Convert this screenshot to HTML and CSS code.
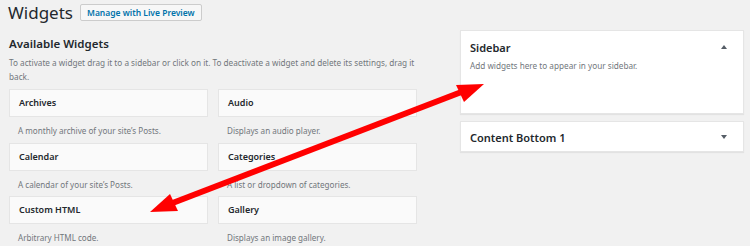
FILE: index.html
```html
<!DOCTYPE html>
<html>
<head>
<meta charset="utf-8">
<link rel="stylesheet" href="styles.css">
</head>
<body>
<div class="page">
  <div class="head">
    <h1 class="title">Widgets</h1>
    <a class="btn">Manage with Live Preview</a>
  </div>
  <div class="cols">
    <div class="left">
      <h2 class="sub">Available Widgets</h2>
      <p class="desc">To activate a widget drag it to a sidebar or click on it. To deactivate a widget and delete its settings, drag it back.</p>
      <div class="grid">
        <div class="widget"><div class="wcard">Archives</div><div class="wdesc">A monthly archive of your site’s Posts.</div></div>
        <div class="widget"><div class="wcard">Audio</div><div class="wdesc">Displays an audio player.</div></div>
        <div class="widget"><div class="wcard">Calendar</div><div class="wdesc">A calendar of your site’s Posts.</div></div>
        <div class="widget"><div class="wcard">Categories</div><div class="wdesc">A list or dropdown of categories.</div></div>
        <div class="widget"><div class="wcard">Custom HTML</div><div class="wdesc">Arbitrary HTML code.</div></div>
        <div class="widget"><div class="wcard">Gallery</div><div class="wdesc">Displays an image gallery.</div></div>
      </div>
    </div>
    <div class="right">
      <div class="panel open">
        <div class="ptitle"><span>Sidebar</span><span class="caret up"></span></div>
        <div class="pdesc">Add widgets here to appear in your sidebar.</div>
      </div>
      <div class="panel">
        <div class="ptitle"><span>Content Bottom 1</span><span class="caret down"></span></div>
      </div>
    </div>
  </div>
</div>
<svg class="arrow" width="750" height="246" viewBox="0 0 750 246">
  <line x1="170" y1="204" x2="464" y2="91" stroke="#f00" stroke-width="6"/>
  <polygon points="150,212 170,194 178,211" fill="#f00"/>
  <polygon points="484,84 464,102 456,85" fill="#f00"/>
</svg>
</body>
</html>
```
FILE: styles.css
```css
* { box-sizing: border-box; }
body {
  margin: 0;
  background: #f1f1f1;
  font-family: "Noto Sans", "Open Sans", sans-serif;
  color: #23282d;
  overflow: hidden;
  position: relative;
  width: 750px;
  height: 246px;
}
.page { padding: 4px 0 0 8px; }
.head { display: flex; align-items: center; gap: 7px; height: 17px; }
.title { margin: 0; font-size: 17px; font-weight: 400; line-height: 17px; }
.btn {
  display: inline-block;
  height: 17px;
  line-height: 15px;
  padding: 0 6px;
  border: 1px solid #ccc;
  background: #f7f7f7;
  border-radius: 2px;
  color: #0073aa;
  font-size: 8.5px;
  font-weight: 600;
}
.cols { display: flex; margin-top: 15px; }
.left { width: 409px; padding-left: 1px; }
.sub { margin: 0; font-size: 11.5px; font-weight: 600; line-height: 16px; }
.desc { margin: 4px 0 0; font-size: 8.2px; line-height: 13.5px; color: #72777c; width: 408px; }
.grid { display: grid; grid-template-columns: 199px 199px; column-gap: 10px; margin-top: 6px; }
.widget { height: 53.5px; }
.wcard {
  height: 28px;
  background: #fafafa;
  border: 1px solid #e5e5e5;
  font-size: 9px;
  font-weight: 600;
  line-height: 26px;
  padding-left: 9px;
}
.wdesc { font-size: 8.1px; color: #72777c; line-height: 12px; padding: 8px 0 0 9px; }
.right { margin-left: 43px; width: 284px; margin-top: -6px; }
.panel {
  background: #fff;
  border: 1px solid #e5e5e5;
  box-shadow: 0 1px 1px rgba(0,0,0,.06);
  height: 31px;
  margin-bottom: 7px;
  padding: 0 9px;
}
.panel.open { height: 84px; }
.ptitle {
  display: flex;
  justify-content: space-between;
  align-items: center;
  height: 30px;
  font-size: 11px;
  font-weight: 600;
}
.open .ptitle { height: 32px; }
.pdesc { font-size: 8.2px; color: #72777c; margin-top: -3px; }
.caret { width: 0; height: 0; border-left: 3px solid transparent; border-right: 3px solid transparent; margin-right: 7px; }
.caret.up { border-bottom: 4px solid #555d66; }
.caret.down { border-top: 4px solid #555d66; }
.arrow { position: absolute; left: 0; top: 0; pointer-events: none; }
```
